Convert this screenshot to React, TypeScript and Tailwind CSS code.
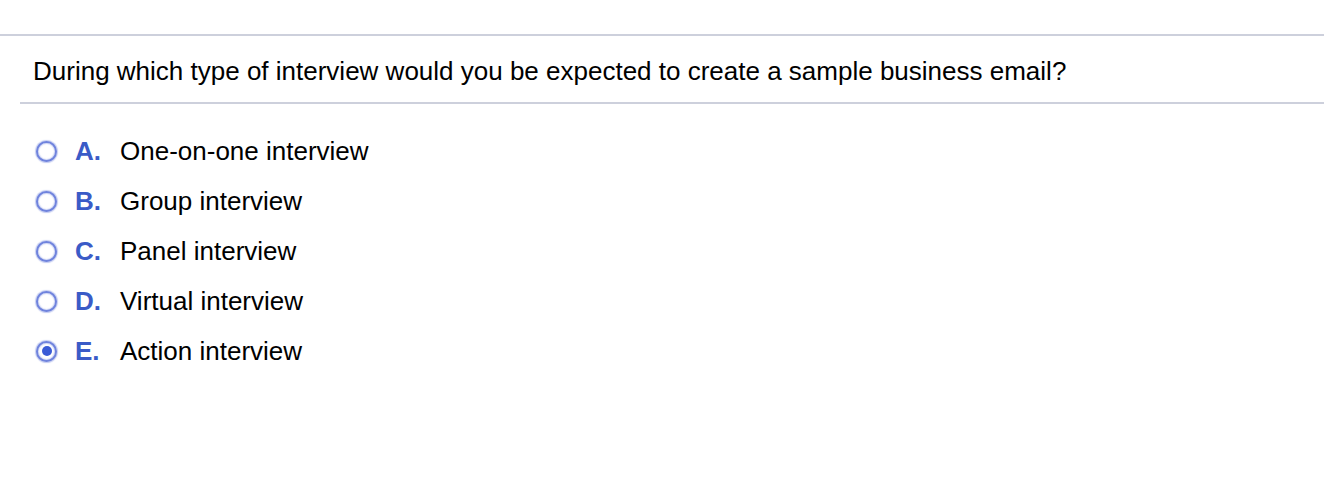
const options = [
  { letter: 'A.', text: 'One-on-one interview' },
  { letter: 'B.', text: 'Group interview' },
  { letter: 'C.', text: 'Panel interview' },
  { letter: 'D.', text: 'Virtual interview' },
  { letter: 'E.', text: 'Action interview' },
];

const selected = 4;

function Radio({ checked }: { checked: boolean }) {
  return (
    <span className="flex h-[21px] w-[21px] shrink-0 items-center justify-center rounded-full border-[2px] border-[#6f83dd] bg-white shadow-[0_0_1px_1px_rgba(111,131,221,0.4),inset_0_0_1px_1px_rgba(111,131,221,0.3)]">
      {checked ? <span className="h-[10px] w-[10px] rounded-full bg-[#3a5bd6]" /> : null}
    </span>
  );
}

export default function App() {
  return (
    <div
      className="h-[488px] w-full bg-white pt-[34px] text-black"
      style={{ fontFamily: '"Liberation Sans", Arial, sans-serif' }}
    >
      <div className="h-[2px] bg-[#cdd0dc]" />
      <div className="flex h-[66px] items-center pl-[33px] pt-[3px] text-[26px] leading-none">
        During which type of interview would you be expected to create a sample business email?
      </div>
      <div className="ml-[20px] h-[2px] bg-[#cdd0dc]" />
      <div className="flex flex-col pt-[22px]">
        {options.map((o, i) => (
          <label key={o.letter} className="flex h-[50px] items-center pl-[36px]">
            <Radio checked={i === selected} />
            <span className="ml-[18px] w-[45px] text-[26px] font-bold text-[#3a5bc7]">{o.letter}</span>
            <span className="text-[26px]">{o.text}</span>
          </label>
        ))}
      </div>
    </div>
  );
}
